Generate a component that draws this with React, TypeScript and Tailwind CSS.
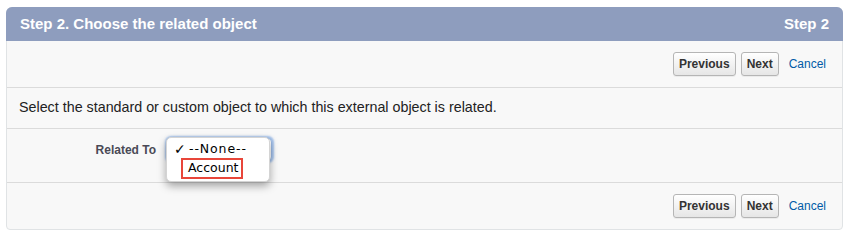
import React from "react";

function Btn({ label }: { label: string }) {
  return (
    <button className="h-[24px] px-[5px] rounded-[3px] border border-[#b5b5b5] bg-gradient-to-b from-white to-[#e6e6e6] text-[12px] font-bold text-[#333] leading-none shadow-[0_1px_0_rgba(0,0,0,0.05)]">
      {label}
    </button>
  );
}

function ButtonBar() {
  return (
    <div className="flex items-center justify-end gap-[5px] pr-[16px]">
      <Btn label="Previous" />
      <Btn label="Next" />
      <a className="ml-[5px] text-[12px] text-[#015ba7] cursor-pointer">Cancel</a>
    </div>
  );
}

export default function App() {
  return (
    <div className="pt-[7px] pl-[6px] font-['Liberation_Sans',Arial,sans-serif] bg-white w-[849px] h-[235px]">
      <div className="w-[837px] rounded-t-[6px] rounded-b-[4px] border border-[#e0e3e5] bg-[#f8f8f8]">
        <div className="h-[34px] -mx-px -mt-px rounded-t-[6px] bg-[#8e9dbe] flex items-center justify-between pl-[14px] pr-[14px] text-white font-bold text-[15px]">
          <span>Step 2. Choose the related object</span>
          <span>Step 2</span>
        </div>
        <div className="h-[47px] flex items-center justify-end border-b border-[#dbdbdb]">
          <ButtonBar />
        </div>
        <div className="h-[41px] flex items-center pl-[12px] text-[14.3px] text-[#222] border-b border-[#dbdbdb]">
          Select the standard or custom object to which this external object is related.
        </div>
        <div className="h-[54px] flex border-b border-[#dbdbdb]">
          <div className="w-[160px] pr-[11px] pt-[12px] text-right text-[12px] font-bold text-[#4a4a56]">
            Related To
          </div>
          <div className="pt-[9px]">
            <div className="relative w-[105px] h-[23px] rounded-[4px] border border-[#9dbbe6] bg-white shadow-[0_0_2px_2px_rgba(95,150,225,0.55)]">
              <div className="absolute -left-[2px] -top-[2px] w-[104px] h-[45px] rounded-[5px] bg-white border border-[#d4d4d4] shadow-[0_4px_9px_rgba(0,0,0,0.35)] font-['DejaVu_Sans',sans-serif] text-[12.5px] text-black">
                <div className="flex items-center h-[20px] pl-[7px] pt-[2px]">
                  <span className="w-[15px] text-[14px] font-bold">✓</span>
                  <span className="tracking-[0.9px]">--None--</span>
                </div>
                <div className="ml-[14px] w-[62px] h-[21px] border-2 border-[#e8463a] flex items-center pl-[5px]">
                  Account
                </div>
              </div>
            </div>
          </div>
        </div>
        <div className="h-[46px] flex items-center justify-end">
          <ButtonBar />
        </div>
      </div>
    </div>
  );
}
